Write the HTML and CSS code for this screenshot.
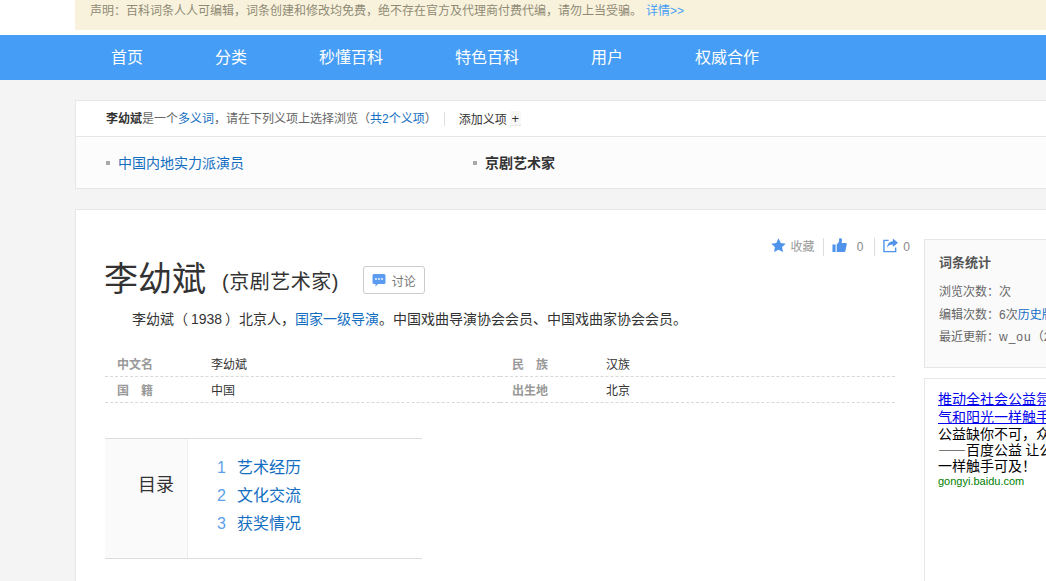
FILE: index.html
```html
<!DOCTYPE html>
<html lang="zh-CN">
<head>
<meta charset="utf-8">
<title>李幼斌</title>
<link rel="stylesheet" href="styles.css">
</head>
<body>
<div class="top">
  <div class="notice">声明&#xFF1A;百科词条人人可编辑&#xFF0C;词条创建和修改均免费&#xFF0C;绝不存在官方及代理商付费代编&#xFF0C;请勿上当受骗。<a class="more" href="#">详情&gt;&gt;</a></div>
</div>
<nav class="nav">
  <a href="#">首页</a><a href="#">分类</a><a href="#">秒懂百科</a><a href="#">特色百科</a><a href="#">用户</a><a href="#">权威合作</a>
</nav>
<section class="poly">
  <div class="poly-head">
    <span class="poly-text"><b class="term">李幼斌</b>是一个<a href="#">多义词</a>&#xFF0C;请在下列义项上选择浏览&#xFF08;<a href="#">共2个义项</a>&#xFF09;</span>
    <span class="poly-add">添加义项<i class="plus">+</i></span>
  </div>
  <ul class="poly-list">
    <li><a href="#">中国内地实力派演员</a></li>
    <li class="current">京剧艺术家</li>
  </ul>
</section>
<section class="card">
  <div class="main">
    <div class="tools">
      <span class="tool first">
        <svg class="ico" viewBox="0 0 16 16"><path d="M8 .3l2.400 5 5.300.7-3.900 3.700 1 5.300L8 12.400 3.200 15l1-5.300L.3 6l5.300-.7z"/></svg>
        <span>收藏</span>
      </span>
      <span class="tool like">
        <svg class="ico" viewBox="0 0 16 16"><path d="M.5 7h3.300v8H.5zM5 7l2.500-3V1.200C7.500.2 10.500-.2 10.700 2c.1 1-.3 2.400-.5 3.300h4.300c1 0 1.400.8 1.200 1.600l-1.400 7c-.2.700-.7 1.100-1.500 1.100H5z"/></svg>
        <span class="num">0</span>
      </span>
      <span class="tool send">
        <svg class="ico share" viewBox="0 0 16 16"><path d="M10.500.5L16 5l-5.500 4.500V7C7.500 7 5.500 8 4.300 10.500c.3-4.500 2.700-6.800 6.200-7z"/><path class="line" d="M6 2.500H1v12h12.500V10"/></svg>
        <span class="num tight">0</span>
      </span>
    </div>
    <div class="title-row">
      <h1>李幼斌</h1>
      <h2>(京剧艺术家)</h2>
      <a class="discuss" href="#">
        <svg class="bubble" viewBox="0 0 14 14"><path d="M2 1h10a1.500 1.500 0 0 1 1.500 1.500v7A1.500 1.500 0 0 1 12 11H6l-2.500 2.500V11H2A1.500 1.500 0 0 1 .5 9.500v-7A1.500 1.500 0 0 1 2 1z"/><circle cx="4" cy="6" r=".9"/><circle cx="7" cy="6" r=".9"/><circle cx="10" cy="6" r=".9"/></svg>
        讨论
      </a>
    </div>
    <p class="summary">李幼斌&#xFF08; 1938 &#xFF09;北京人&#xFF0C;<a href="#">国家一级导演</a>。中国戏曲导演协会会员、中国戏曲家协会会员。</p>
    <dl class="info">
      <div class="info-row"><dt>中文名</dt><dd>李幼斌</dd></div>
      <div class="info-row"><dt>民&emsp;族</dt><dd>汉族</dd></div>
      <div class="info-row"><dt>国&emsp;籍</dt><dd>中国</dd></div>
      <div class="info-row"><dt>出生地</dt><dd>北京</dd></div>
    </dl>
    <div class="toc">
      <div class="toc-title">目录</div>
      <ol class="toc-list">
        <li><span class="idx">1</span><a href="#">艺术经历</a></li>
        <li><span class="idx">2</span><a href="#">文化交流</a></li>
        <li><span class="idx">3</span><a href="#">获奖情况</a></li>
      </ol>
    </div>
  </div>
  <aside class="side">
    <div class="stats">
      <h3>词条统计</h3>
      <p>浏览次数&#xFF1A;次</p>
      <p>编辑次数&#xFF1A;6次<a href="#">历史版本</a></p>
      <p>最近更新&#xFF1A;<span class="user">w_ou</span>&#xFF08;2019-01-01&#xFF09;</p>
    </div>
    <div class="ad">
      <a href="#">推动全社会公益氛围<br>气和阳光一样触手可及</a>
      <p>公益缺你不可&#xFF0C;众人参与</p>
      <p>——百度公益 让公益</p>
      <p>一样触手可及&#xFF01;</p>
      <span class="ad-url">gongyi.baidu.com</span>
    </div>
  </aside>
</section>
</body>
</html>
```
FILE: styles.css
```css
* { box-sizing: border-box; }
html, body { margin: 0; height: 581px; overflow: hidden; }
body {
  width: 1046px;
  background: #f4f4f4;
  font-family: "Liberation Sans", "Noto Sans CJK SC", sans-serif;
  font-size: 12px;
  color: #333;
}
a { color: #136ec2; text-decoration: none; }
ul, ol, dl, dd, p, h1, h2, h3 { margin: 0; padding: 0; list-style: none; font-weight: normal; }

.top { height: 35px; background: #fff; padding-left: 75px; }
.notice {
  width: 1100px;
  height: 30px;
  background: #f8f2dc;
  padding-left: 15px;
  line-height: 22px;
  color: #8f8a75;
}
.more { color: #459df5; margin-left: 4px; }

.nav { height: 45px; background: #459df5; padding-left: 111px; display: flex; gap: 72px; }
.nav a { color: #fff; font-size: 16px; line-height: 45px; }

.poly {
  width: 1100px;
  margin: 20px 0 0 75px;
  background: #fcfcfc;
  border: 1px solid #e6e6e6;
  height: 89px;
}
.poly-head {
  height: 36px;
  background: #fff;
  border-bottom: 1px solid #e6e6e6;
  padding-left: 30px;
  display: flex;
  align-items: center;
  color: #666;
}
.term { color: #333; }
.poly-text { padding-right: 7px; border-right: 1px solid #e0e0e0; line-height: 14px; }
.poly-add { margin-left: 14px; color: #333; display: flex; align-items: center; }
.plus {
  font-style: normal;
  width: 11px;
  margin-left: 3px;
  height: 15px;
  line-height: 15px;
  text-align: center;
  background: #f7f7f7;
  border-bottom: 1px solid #e6e6e6;
  font-size: 13px;
}
.poly-list { display: flex; padding: 17px 0 0 30px; font-size: 14px; line-height: 18px; }
.poly-list li { width: 367px; padding-left: 12px; position: relative; }
.poly-list li::before {
  content: "";
  position: absolute;
  left: 0;
  top: 7px;
  width: 4px;
  height: 4px;
  background: #a8a8a8;
}
.current { font-weight: bold; color: #333; }

.card {
  width: 1100px;
  height: 400px;
  margin: 20px 0 0 75px;
  background: #fff;
  border: 1px solid #e6e6e6;
  padding: 0 0 0 29px;
  display: flex;
}
.main { width: 790px; position: relative; flex: none; }
.tools { position: absolute; right: -26px; top: 28px; display: flex; color: #999; line-height: 20px; }
.tool { display: flex; align-items: center; padding: 0 11px 0 9px; border-left: 1px solid #ddd; gap: 5px; height: 18px; }
.tool.first { border-left: 0; padding-right: 8px; }
.tool.like { padding: 0 11px 0 8px; }
.tool.send { padding-left: 8px; }
.ico { width: 15px; height: 15px; fill: #4f94ea; margin-top: -3px; }
.num { color: #888; margin-left: 5px; }
.num.tight { margin-left: 0; }
.share .line { fill: none; stroke: #4f94ea; stroke-width: 1.500; }

.title-row { display: flex; align-items: center; padding-top: 45px; height: 93px; }
h1 { font-size: 34px; color: #333; line-height: 48px; margin-left: -1px; }
h2 { font-size: 20px; color: #333; margin-left: 16px; line-height: 48px; padding-top: 6px; letter-spacing: .5px; }
.discuss {
  margin-left: 24px;
  margin-top: 2px;
  width: 62px;
  height: 28px;
  border: 1px solid #ccc;
  border-radius: 3px;
  color: #777;
  font-size: 12px;
  display: flex;
  align-items: center;
  padding-left: 8px;
  gap: 6px;
}
.bubble { width: 14px; height: 14px; fill: #5b9bf0; }
.bubble circle { fill: #fff; }

.summary { margin-top: 4px; padding-left: 27px; font-size: 14px; line-height: 24px; color: #333; word-spacing: -1px; }

.info {
  margin-top: 20px;
  display: grid;
  grid-template-columns: 395px 395px;
  width: 790px;
}
.info-row { display: flex; height: 26px; align-items: center; border-bottom: 1px dashed #d8d8d8; }
.info dt { width: 106px; padding-left: 12px; font-weight: bold; color: #999; }
.info dd { margin: 0; color: #333; }

.toc {
  margin-top: 35px;
  width: 317px;
  height: 121px;
  border-top: 1px solid #ddd;
  border-bottom: 1px solid #ddd;
  display: flex;
}
.toc-title {
  width: 83px;
  background: #fafafa;
  border-right: 1px solid #eee;
  font-size: 18px;
  line-height: 92px;
  text-align: right;
  padding-right: 13px;
  color: #333;
}
.toc-list { padding: 15px 0 0 29px; font-size: 16px; line-height: 28px; }
.toc-list li { display: flex; }
.idx { width: 20px; color: #5d9fe6; }

.side { margin-left: 29px; width: 260px; flex: none; padding-top: 29px; }
.stats {
  height: 129px;
  background: #fafafa;
  border: 1px solid #e6e6e6;
  padding: 14px 14px;
  color: #666;
  line-height: 22.500px;
}
.stats h3 { font-size: 13px; font-weight: bold; color: #555; margin-bottom: 9px; line-height: 18px; }
.stats a { color: #136ec2; }
.user { letter-spacing: 1px; }
.ad {
  margin-top: 10px;
  height: 300px;
  background: #fff;
  border: 1px solid #e6e6e6;
  padding: 10px 13px;
  font-size: 14px;
  line-height: 16px;
  color: #000;
  font-family: "Noto Sans CJK SC", sans-serif;
}
.ad a { color: #00e; text-decoration: underline; display: block; line-height: 18px; white-space: nowrap; }
.ad p { white-space: nowrap; }
.ad-url { display: block; color: #008000; font-size: 11px; line-height: 17px; font-family: "Liberation Sans", sans-serif; }
```
